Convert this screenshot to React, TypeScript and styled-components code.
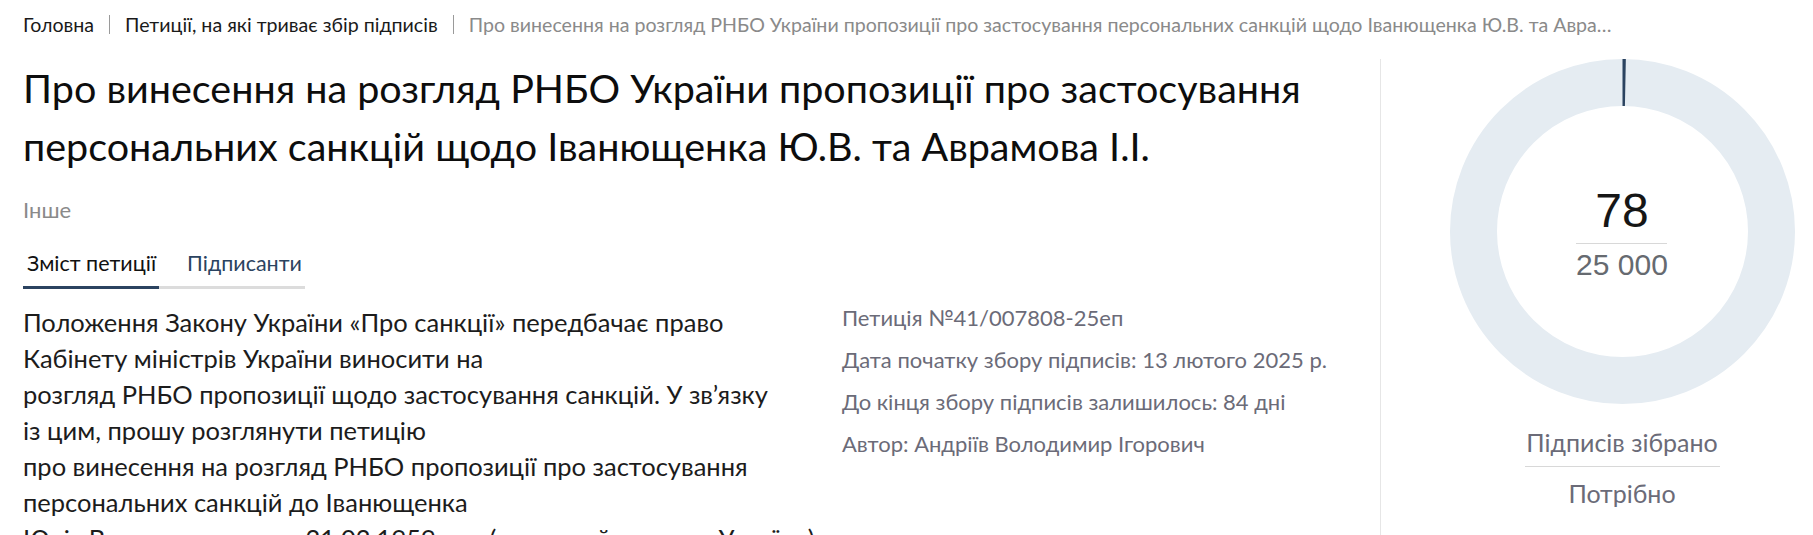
import styled, { createGlobalStyle } from 'styled-components';

const GlobalStyle = createGlobalStyle`
  html, body {
    margin: 0;
    padding: 0;
    background: #ffffff;
  }
  body {
    font-family: Lato, "Noto Sans", sans-serif;
    color: #111111;
  }
`;

const Page = styled.div`
  width: 1813px;
  height: 535px;
  overflow: hidden;
  box-sizing: border-box;
`;

const Breadcrumbs = styled.nav`
  display: flex;
  align-items: center;
  box-sizing: border-box;
  height: 59px;
  padding: 0 200px 10px 23px;
  font-size: 19.6px;
  line-height: 24px;
  white-space: nowrap;
`;

const Crumb = styled.a<{ $current?: boolean }>`
  color: ${(p) => (p.$current ? '#8a8a8a' : '#1a1a1a')};
  text-decoration: none;
  ${(p) =>
    p.$current &&
    `
    flex: 1;
    min-width: 0;
    overflow: hidden;
    text-overflow: ellipsis;
  `}
`;

const Divider = styled.span`
  flex-shrink: 0;
  width: 1px;
  height: 19px;
  margin: 0 15px;
  background: #9a9a9a;
`;

const Main = styled.div`
  display: grid;
  grid-template-columns: 1380px 1fr;
`;

const Left = styled.section`
  box-sizing: border-box;
  padding: 0 40px 0 23px;
`;

const Title = styled.h1`
  margin: 0;
  font-size: 39.5px;
  font-weight: 400;
  line-height: 58px;
  color: #0d0d0d;
  max-width: 1320px;
`;

const Category = styled.div`
  margin-top: 21px;
  font-size: 22px;
  line-height: 28px;
  color: #8a8a8a;
`;

const Tabs = styled.div`
  display: inline-flex;
  margin-top: 25px;
  border-bottom: 3px solid #dcdcdc;
`;

const Tab = styled.button<{ $active?: boolean }>`
  margin: 0 0 -3px;
  padding: 0 3px 9px 4px;
  border: 0;
  border-bottom: 3px solid ${(p) => (p.$active ? '#2b4360' : 'transparent')};
  background: none;
  font-family: inherit;
  font-size: 21.5px;
  line-height: 28px;
  color: ${(p) => (p.$active ? '#111111' : '#2b4360')};
  cursor: pointer;

  & + & {
    padding-left: 28px;
  }
`;

const BodyGrid = styled.div`
  display: grid;
  grid-template-columns: 819px 1fr;
  margin-top: 8px;
`;

const Text = styled.p`
  margin: 7px 0 0;
  font-size: 25.5px;
  line-height: 36px;
  color: #1c1c1c;
`;

const Info = styled.ul`
  margin: 0;
  padding: 0;
  list-style: none;
  font-size: 22px;
  line-height: 42px;
  color: #6b6b78;
`;

const Aside = styled.aside`
  display: flex;
  flex-direction: column;
  align-items: center;
  box-sizing: border-box;
  height: 476px;
  padding-left: 50px;
  border-left: 1px solid #e6e6e6;
`;

const Ring = styled.div`
  display: grid;
  width: 345px;
  height: 345px;

  & > * {
    grid-area: 1 / 1;
  }
`;

const RingCenter = styled.div`
  display: flex;
  flex-direction: column;
  align-items: center;
  align-self: center;
  justify-self: center;
  transform: translateY(2px);
  font-family: "Liberation Sans", Arial, sans-serif;
`;

const Count = styled.div`
  width: 91px;
  padding-bottom: 9px;
  border-bottom: 1px solid #d8d8d8;
  text-align: center;
  font-size: 48px;
  line-height: 46px;
  color: #161616;
`;

const Goal = styled.div`
  margin-top: 6px;
  font-size: 30px;
  line-height: 30px;
  color: #666a70;
`;

const Stats = styled.div`
  width: 195px;
  margin-top: 23px;
  text-align: center;
  font-size: 25px;
  line-height: 30px;
  color: #6b6b78;
`;

const StatLine = styled.div<{ $ruled?: boolean }>`
  padding: ${(p) => (p.$ruled ? '0 0 9px' : '11px 0 0')};
  border-bottom: ${(p) => (p.$ruled ? '1px solid #d8d8d8' : 'none')};
  white-space: nowrap;
`;

const collected = 78;
const needed = 25000;

function ProgressRing() {
  const r = 149;
  const c = 2 * Math.PI * r;
  const part = (collected / needed) * c;
  return (
    <Ring>
      <svg width="345" height="345" viewBox="0 0 345 345">
        <circle cx="172.5" cy="172.5" r={r} fill="none" stroke="#e5ecf2" strokeWidth="47" />
        <circle
          cx="172.5"
          cy="172.5"
          r={r}
          fill="none"
          stroke="#2b4360"
          strokeWidth="47"
          strokeDasharray={`${part} ${c}`}
          transform="rotate(-90 172.5 172.5)"
        />
      </svg>
      <RingCenter>
        <Count>{collected}</Count>
        <Goal>25 000</Goal>
      </RingCenter>
    </Ring>
  );
}

export default function App() {
  return (
    <Page>
      <GlobalStyle />
      <Breadcrumbs>
        <Crumb href="#">Головна</Crumb>
        <Divider />
        <Crumb href="#">Петиції, на які триває збір підписів</Crumb>
        <Divider />
        <Crumb $current>
          Про винесення на розгляд РНБО України пропозиції про застосування персональних санкцій щодо
          Іванющенка Ю.В. та Аврамова І.І.
        </Crumb>
      </Breadcrumbs>
      <Main>
        <Left>
          <Title>
            Про винесення на розгляд РНБО України пропозиції про застосування персональних санкцій
            щодо Іванющенка Ю.В. та Аврамова І.І.
          </Title>
          <Category>Інше</Category>
          <Tabs>
            <Tab $active>Зміст петиції</Tab>
            <Tab>Підписанти</Tab>
          </Tabs>
          <BodyGrid>
            <Text>
              Положення Закону України «Про санкції» передбачає право
              <br />
              Кабінету міністрів України виносити на
              <br />
              розгляд РНБО пропозиції щодо застосування санкцій. У зв’язку
              <br />
              із цим, прошу розглянути петицію
              <br />
              про винесення на розгляд РНБО пропозиції про застосування
              <br />
              персональних санкцій до Іванющенка
              <br />
              Юрія Володимировича, 21.02.1959 р.н. (народний депутат України)
            </Text>
            <Info>
              <li>Петиція №41/007808-25еп</li>
              <li>Дата початку збору підписів: 13 лютого 2025 р.</li>
              <li>До кінця збору підписів залишилось: 84 дні</li>
              <li>Автор: Андріїв Володимир Ігорович</li>
            </Info>
          </BodyGrid>
        </Left>
        <Aside>
          <ProgressRing />
          <Stats>
            <StatLine $ruled>Підписів зібрано</StatLine>
            <StatLine>Потрібно</StatLine>
          </Stats>
        </Aside>
      </Main>
    </Page>
  );
}
